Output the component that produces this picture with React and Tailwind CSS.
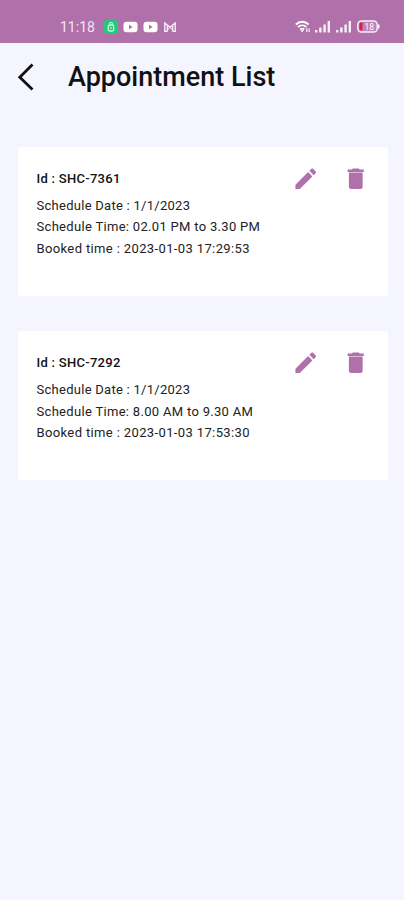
import React from "react";

const appointments = [
  { id: "SHC-7361", date: "1/1/2023", time: "02.01 PM to 3.30 PM", booked: "2023-01-03 17:29:53" },
  { id: "SHC-7292", date: "1/1/2023", time: "8.00 AM to 9.30 AM", booked: "2023-01-03 17:53:30" },
];

function PencilIcon() {
  return (
    <svg viewBox="0 0 24 24" className="size-[27.5px]" fill="currentColor">
      <path d="M3 17.25V21h3.75L17.81 9.94l-3.75-3.75L3 17.25zM20.71 7.04a1 1 0 0 0 0-1.41l-2.34-2.34a1 1 0 0 0-1.41 0l-1.83 1.83 3.75 3.75 1.83-1.83z" />
    </svg>
  );
}

function TrashIcon() {
  return (
    <svg viewBox="0 0 24 24" className="size-[27.5px]" fill="currentColor">
      <path d="M6 19c0 1.1.9 2 2 2h8c1.1 0 2-.9 2-2V7H6v12z" />
      <path d="M19 4h-3.5l-1-1h-5l-1 1H5v2h14V4z" />
      <path d="M6 6h12v1H6z" opacity=".45" />
    </svg>
  );
}

function VideoIcon() {
  return (
    <svg viewBox="0 0 15 12" className="h-3 w-[15px]">
      <rect x=".5" y=".7" width="14" height="10.6" rx="3" fill="#fff" />
      <path d="M6 3.8v4.4L9.7 6z" fill="#b070aa" />
    </svg>
  );
}

function SignalIcon() {
  return (
    <svg viewBox="0 0 16 13" className="h-[13px] w-4" fill="#fff">
      <rect x="0" y="10" width="2.4" height="2.5" opacity=".85" />
      <rect x="4.2" y="7.5" width="2.4" height="5" opacity=".9" />
      <rect x="8.4" y="4.5" width="2.4" height="8" opacity=".9" />
      <rect x="12.6" y="1" width="2.4" height="11.5" opacity=".9" />
    </svg>
  );
}

function StatusBar() {
  return (
    <div className="flex h-[43px] items-center justify-between bg-[#b070aa] pt-[10px] pr-[24px] pl-[60px]">
      <div className="flex items-center">
        <span className="w-[44px] text-[14px] leading-none text-[#f5e6f4]">11:18</span>
        <svg viewBox="0 0 14 14" className="size-[14px]">
          <rect width="14" height="14" rx="4" fill="#20cc77" />
          <rect x="4.3" y="5" width="5.4" height="6" rx="1.5" fill="none" stroke="#c9f7df" strokeWidth="1.3" />
          <path d="M5.5 5V4a1.5 1.5 0 0 1 3 0v1M7 7v2" fill="none" stroke="#c9f7df" strokeWidth="1.1" />
        </svg>
        <div className="ml-[5px] flex gap-[4.5px]">
          <VideoIcon />
          <VideoIcon />
        </div>
        <svg viewBox="0 0 14 12" className="ml-[5px] h-3 w-[14px]" fill="none" stroke="#f7e9f5">
          <path d="M1.8 10.2V2L7 6.3 12.2 2v8.2M4.4 10.6V4.5M9.6 10.6V4.5M1 10.2h3.4M9.6 10.2H13" strokeWidth="1.4" />
          <path d="M4.4 9.2L7 6.3l2.6 2.9" strokeWidth="1" />
        </svg>
      </div>
      <div className="flex items-center">
        <svg viewBox="0 0 16 13" className="h-[13px] w-4" fill="none" stroke="#fff" strokeWidth="1.8">
          <path d="M.8 4.5C4.5.8 10 .8 13.6 4.5M3 7.1c2.5-2.4 5.9-2.4 8.4 0M5.2 9.5c1.2-1.1 2.8-1.1 4 0" />
          <path d="M7.2 12.6L5.5 10.3h3.4z" fill="#fff" stroke="none" />
          <path d="M11.8 8.3v3.8M14.1 8.3v3.8" strokeWidth="1.1" />
        </svg>
        <div className="ml-[4px] flex gap-[5px]">
          <SignalIcon />
          <SignalIcon />
        </div>
        <svg viewBox="0 0 23 13" className="ml-[5.5px] h-[13px] w-[23px]">
          <rect x=".8" y=".9" width="19.4" height="11.2" rx="3.6" fill="#bd82b8" stroke="#fbeff9" strokeWidth="1.5" />
          <path d="M4.4 2.4h1v8.2h-1a2 2 0 0 1-2-2V4.4a2 2 0 0 1 2-2z" fill="#e21b3d" />
          <path d="M21.7 4.5v4" stroke="#fbeff9" strokeWidth="1.6" />
          <text x="7.5" y="9.6" fontSize="8.5" fill="#fff" fontFamily="Roboto, sans-serif">18</text>
        </svg>
      </div>
    </div>
  );
}

function AppointmentCard({ item }) {
  return (
    <article className="flex h-[149px] justify-between rounded-[2px] bg-white pr-[18.5px] pl-[18.5px]">
      <div className="pt-[21px] text-[13px] leading-[21.4px] tracking-[0.27px] whitespace-nowrap text-[#222]">
        <h2 className="mb-[5.5px] font-medium tracking-[0.28px] text-[#111]">Id : {item.id}</h2>
        <p>Schedule Date : {item.date}</p>
        <p className="tracking-[0.31px]">Schedule Time: {item.time}</p>
        <p className="tracking-[0.37px]">Booked time : {item.booked}</p>
      </div>
      <div className="flex h-[28px] gap-[22px] pt-[18px] text-[#b070aa]">
        <button aria-label="Edit" className="size-[27.5px]"><PencilIcon /></button>
        <button aria-label="Delete" className="size-[27.5px]"><TrashIcon /></button>
      </div>
    </article>
  );
}

export default function App() {
  return (
    <div className="h-[900px] w-[404px] overflow-hidden bg-[#f5f5ff] font-[Roboto,sans-serif]">
      <StatusBar />
      <header className="flex h-[68px] items-center pl-[17px]">
        <svg viewBox="0 0 18 28" className="h-7 w-[18px]" fill="none" stroke="#111" strokeWidth="2.8">
          <path d="M15.5 1.5L2.8 14.3l12.7 12.2" />
        </svg>
        <h1 className="ml-[33px] text-[27px] leading-none font-medium text-[#111]">Appointment List</h1>
      </header>
      <main className="flex flex-col gap-[35.4px] pt-[36px] pr-[16.5px] pl-[18px]">
        {appointments.map((item) => (
          <AppointmentCard key={item.id} item={item} />
        ))}
      </main>
    </div>
  );
}
